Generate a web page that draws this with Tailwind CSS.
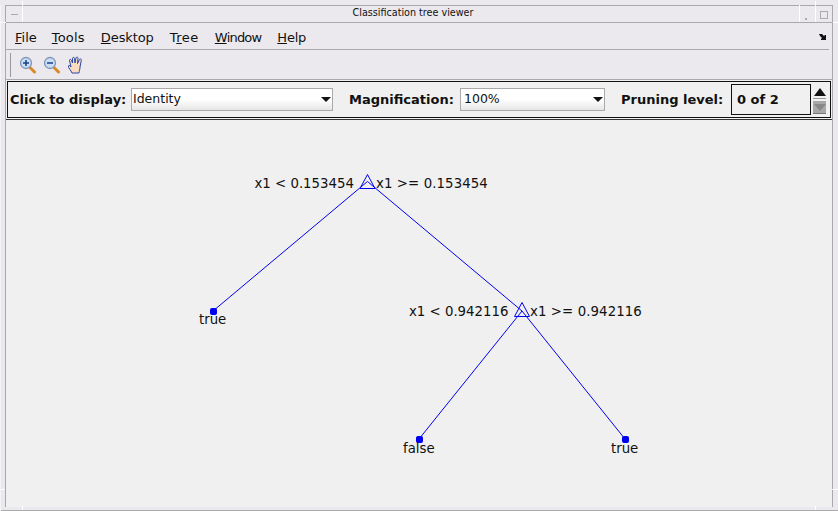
<!DOCTYPE html>
<html>
<head>
<meta charset="utf-8">
<script src="https://cdn.jsdelivr.net/npm/@tailwindcss/browser@4"></script>
</head>
<body class="m-0 overflow-hidden">
<div class="relative w-[838px] h-[511px] bg-[#ebe9ee] font-['DejaVu_Sans',sans-serif] text-[#111] pt-[5px] pb-[4px] px-[5px] flex flex-col overflow-hidden">
  <!-- window frame decorations -->
  <div class="absolute left-[22px] top-[1px] w-px h-[22px] bg-white"></div>
  <div class="absolute left-[1px] top-[22px] w-[22px] h-px bg-white"></div>
  <div class="absolute left-[799px] top-[5px] w-px h-[18px] bg-white"></div>
  <div class="absolute left-[815px] top-[1px] w-px h-[22px] bg-white"></div>
  <div class="absolute left-[833px] top-[22px] w-[5px] h-px bg-white"></div>
  <div class="absolute left-0 top-[489px] w-[5px] h-px bg-white"></div>
  <div class="absolute left-[832px] top-[489px] w-[6px] h-px bg-white"></div>
  <div class="absolute left-[22px] top-[506px] w-px h-[5px] bg-white"></div>
  <div class="absolute left-[815px] top-[506px] w-px h-[5px] bg-white"></div>
  <div class="absolute left-0 bottom-0 w-full h-px bg-[#aaa]"></div>
  <div class="absolute left-0 top-[5px] w-[1px] h-[506px] bg-[#f4f4f4]"></div>

  <div class="flex-1 flex flex-col border-t border-l border-r border-[#a9a9ad] min-h-0">
    <!-- title -->
    <div class="relative h-[16px] shrink-0 border-b border-[#a9a9ad] box-content text-[9.6px] leading-[14px] text-center pr-[12px]">
      <span class="absolute left-[5px] top-[8px] w-[7px] h-px bg-[#aaa]"></span>
      <span>Classification tree viewer</span>
      <span class="absolute right-[25px] top-[12px] w-[2px] h-[2px] bg-[#aaa]"></span>
      <span class="absolute right-[4px] top-[5px] w-[8px] h-[8px] border border-[#aaa]"></span>
    </div>
    <!-- menu -->
    <div class="relative h-[23px] shrink-0 border-b border-[#a9a9ad] flex items-center pt-[3px] pl-[9px] text-[13px] mr-[3px] box-content">
      <span class="mr-[15px]"><u>F</u>ile</span>
      <span class="mr-[16px] tracking-[0.2px]"><u>T</u>ools</span>
      <span class="mr-[16px] tracking-[-0.1px]"><u>D</u>esktop</span>
      <span class="mr-[16px] tracking-[0.5px]">T<u>r</u>ee</span>
      <span class="mr-[16px] tracking-[-0.8px]"><u>W</u>indow</span>
      <span class="tracking-[-0.2px]"><u>H</u>elp</span>
      <svg class="absolute right-[2px] top-[10px]" width="8" height="8" viewBox="0 0 8 8"><path d="M0 1 L3 1 L4 2 L5 3 L6 2 L7 2 L7 7 L2 7 L2 6 L3 5 L2 4 L1 3 Z" fill="#111"/></svg>
    </div>
    <!-- toolbar -->
    <div class="h-[28px] shrink-0 border-b border-[#a9a9ad] flex items-center pl-[4px] pt-[1px] gap-[7px] box-content">
      <div class="w-px h-[24px] bg-[#999] mr-[1px]"></div>
      <svg width="17" height="18" viewBox="0 0 17 18">
        <path d="M10 10.500 L15.500 16" stroke="#d98a22" stroke-width="3" stroke-linecap="round"/>
        <circle cx="7" cy="7" r="5.500" fill="#c9ddf3" stroke="#7e96b8" stroke-width="1.300"/>
        <path d="M4 7H10M7 4V10" stroke="#1c3f8e" stroke-width="1.500"/>
      </svg>
      <svg width="17" height="18" viewBox="0 0 17 18">
        <path d="M10 10.500 L15.500 16" stroke="#d98a22" stroke-width="3" stroke-linecap="round"/>
        <circle cx="7" cy="7" r="5.500" fill="#c9ddf3" stroke="#7e96b8" stroke-width="1.300"/>
        <path d="M4 7H10" stroke="#1c3f8e" stroke-width="1.500"/>
      </svg>
      <svg width="17" height="18" viewBox="0 0 17 18">
        <path d="M5 17 C4 14 1 12 1.500 10 C2 8.500 3.500 10 4 11 L2.500 4.500 C2.500 3 4 3 4.500 4.500 L5.500 7 L5.500 2.500 C5.500 1 7.500 1 7.500 2.500 L8 7 L9 1.800 C9.500 .5 11.200 1 11 2.500 L10.500 7.500 L12.500 3.500 C13 2.300 14.700 3 14.300 4.300 L13 11 C13 14 12 15 12 17 Z" fill="#fbdcc0" stroke="#2a47a8" stroke-width="1"/>
      </svg>
    </div>
    <!-- control panel -->
    <div class="pt-px pb-px px-px bg-[#f0f0f0] border-b border-[#333] shrink-0 box-content">
      <div class="h-[37px] bg-[#f0f0f0] border border-[#111] flex items-center pl-[2px] text-[13px] font-bold">
        <span class="w-[121px]">Click to display:</span>
        <div class="relative w-[202px] h-[23px] border border-[#a9a9a9] bg-gradient-to-b from-white via-white to-[#e6e6e6] font-normal text-[12.500px] leading-[20px] pl-[1px] mr-[16px]">Identity
          <span class="absolute right-[1px] top-[8px] border-t-[5px] border-x-[5px] border-x-transparent border-t-[#111]"></span>
        </div>
        <span class="w-[111px]">Magnification:</span>
        <div class="relative w-[145px] h-[23px] border border-[#a9a9a9] bg-gradient-to-b from-white via-white to-[#e6e6e6] font-normal text-[12.500px] leading-[20px] pl-[3px] mr-[16px]">100%
          <span class="absolute right-[1px] top-[8px] border-t-[5px] border-x-[5px] border-x-transparent border-t-[#111]"></span>
        </div>
        <span class="w-[110px]">Pruning level:</span>
        <div class="w-[80px] h-[31px] border border-[#111] flex items-center pl-[5px] mr-[1px]">0 of 2</div>
        <div class="flex flex-col gap-[2px] ml-[1px]">
          <div class="w-[13px] h-[13px] bg-[#f0f0f0] border-b border-[#999] flex justify-center items-start pt-[2px]"><span class="border-b-[8px] border-x-[6px] border-x-transparent border-b-[#111]"></span></div>
          <div class="w-[13px] h-[13px] bg-[#a8a8a8] border-b border-[#777] flex justify-center items-start pt-[3px]"><span class="border-t-[7px] border-x-[6px] border-x-transparent border-t-[#888]"></span></div>
        </div>
      </div>
    </div>
    <!-- tree -->
    <svg class="flex-1 min-h-0 w-full bg-[#f0f0f0] block" viewBox="6 120 826 387" width="826" height="387" font-family="DejaVu Sans" font-size="13.300" fill="#111">
      <g stroke="#0000f0" stroke-width="1" fill="none">
        <path d="M367.500 181.500 L213 311 M367.500 181.500 L522 311 M522 311 L419 439 M522 311 L625 439"/>
        <path d="M367.500 174.500 L360 188.500 H375 Z"/>
        <path d="M522 302.500 L514.500 316.500 H529.500 Z"/>
      </g>
      <rect x="210" y="308" width="7" height="7" rx="2" fill="#0000f0"/>
      <rect x="416" y="436" width="7" height="7" rx="2" fill="#0000f0"/>
      <rect x="622" y="436" width="7" height="7" rx="2" fill="#0000f0"/>
      <text x="254.500" y="188">x1 &lt; 0.153454</text>
      <text x="376" y="188" letter-spacing="0.1">x1 &gt;= 0.153454</text>
      <text x="409" y="316">x1 &lt; 0.942116</text>
      <text x="530" y="316" letter-spacing="0.1">x1 &gt;= 0.942116</text>
      <text x="199" y="324">true</text>
      <text x="403" y="453">false</text>
      <text x="611" y="453">true</text>
    </svg>
  </div>
</div>
</body>
</html>
